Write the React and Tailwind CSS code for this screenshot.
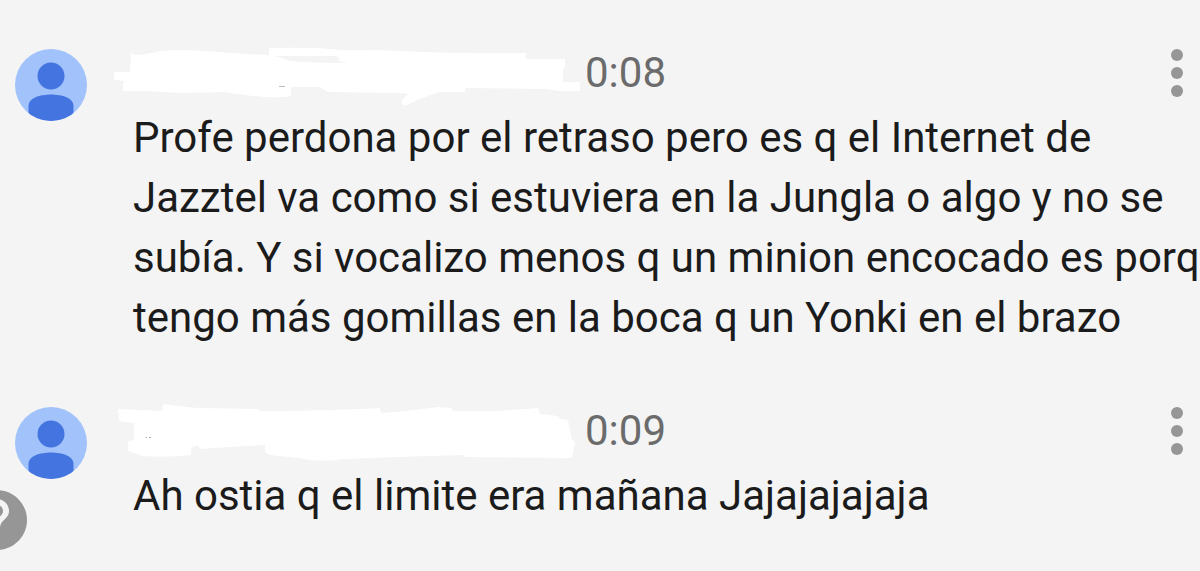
import { MdHelp } from "react-icons/md";

const comments = [
  {
    id: 1,
    time: "0:08",
    lines: [
      "Profe perdona por el retraso pero es q el Internet de",
      "Jazztel va como si estuviera en la Jungla o algo y no se",
      "subía. Y si vocalizo menos q un minion encocado es porq",
      "tengo más gomillas en la boca q un Yonki en el brazo",
    ],
    Scribble: ScribbleOne,
  },
  {
    id: 2,
    time: "0:09",
    lines: ["Ah ostia q el limite era mañana Jajajajajaja"],
    Scribble: ScribbleTwo,
  },
];

// White marker strokes that hide the author's name
function ScribbleOne() {
  return (
    <svg viewBox="111 42 470 62" className="-ml-[22px] w-[470px] h-[62px] shrink-0 overflow-visible" aria-hidden="true">
      <path
        fill="#fff"
        d="M131 52L134 55Q150 54 160 51Q180 49 205 51Q240 54 269 55V48Q320 47 340 50Q400 50 420 52Q480 54 526 53V59H565V67L563 69V82L580 82V91Q560 92 548 89L465 88V92L440 92Q420 98 405 106L402 104V100L408 94Q400 93 395 93L330 92Q324 91 320 87L291 87V96Q280 98 265 97Q240 95 225 92Q180 94 148 91H123V83L125 81L114 80V72H130Z"
      />
      <path fill="#f4f4f4" d="M274 56H336L340 58L338 61L348 63Q315 63 290 61Q283 58 274 56Z" />
      <path stroke="#bbb" d="M279 86.500H285" />
    </svg>
  );
}

function ScribbleTwo() {
  return (
    <svg viewBox="111 400 470 62" className="-ml-[22px] w-[470px] h-[62px] shrink-0 overflow-visible" aria-hidden="true">
      <path
        fill="#fff"
        d="M118 409L162 411L163 404Q185 407 200 408L258 409L260 411Q330 411 380 408L381 413Q410 411 438 407L452 408L453 411Q500 412 538 408L540 414L558 416L560 419L568 420L570 431L572 440L575 442L572 458L465 457V455Q390 457 345 459Q320 463 298 458L270 455L265 452V445Q230 447 200 449L198 445L191 448V455Q165 458 143 456L128 451V441L134 440V423L119 421Z"
      />
      <path stroke="#aaa" d="M146 437.500H147M149 437.500H151" />
    </svg>
  );
}

function Avatar() {
  return (
    <svg viewBox="0 0 72 72" className="mt-[7px] size-[72px] shrink-0" role="img" aria-label="Usuario">
      <defs>
        <clipPath id="avatar">
          <circle cx="36" cy="36" r="36" />
        </clipPath>
      </defs>
      <g clipPath="url(#avatar)">
        <rect width="72" height="72" fill="#a1c2fa" />
        <circle cx="36" cy="27" r="13.500" fill="#4374e0" />
        <path fill="#4374e0" d="M13.500 72V57C13.500 49 25 45.500 36 45.500S58.500 49 58.500 57V72Z" />
      </g>
    </svg>
  );
}

function Comment({ time, lines, Scribble }) {
  return (
    <article className="flex gap-[46px]">
      <Avatar />
      <div className="min-w-0 flex-1">
        <header className="flex h-[62px] items-center">
          <Scribble />
          <time className="ml-1 text-[#6b6b6b]">{time}</time>
          <button type="button" aria-label="Más opciones" className="ml-auto mr-[17px]">
            <svg viewBox="0 0 12 48" className="h-12 w-3 fill-[#969696]">
              <circle cx="6" cy="6" r="6" />
              <circle cx="6" cy="24" r="6" />
              <circle cx="6" cy="42" r="6" />
            </svg>
          </button>
        </header>
        <p className="mt-1 whitespace-pre">{lines.join("\n")}</p>
      </div>
    </article>
  );
}

export default function App() {
  return (
    <main className="relative min-h-screen overflow-hidden bg-[#f4f4f4] pt-[42px] pl-[15px] font-['Roboto',sans-serif] text-[42px] leading-[60px] text-[#1b1b1b]">
      <div className="flex flex-col gap-[52px]">
        {comments.map((comment) => (
          <Comment key={comment.id} {...comment} />
        ))}
      </div>

      {/* Help button peeking in from the left edge */}
      <button type="button" aria-label="Ayuda" className="absolute bottom-[15px] -left-[39px] text-[#969696]">
        <MdHelp className="size-[72px]" />
      </button>
    </main>
  );
}
